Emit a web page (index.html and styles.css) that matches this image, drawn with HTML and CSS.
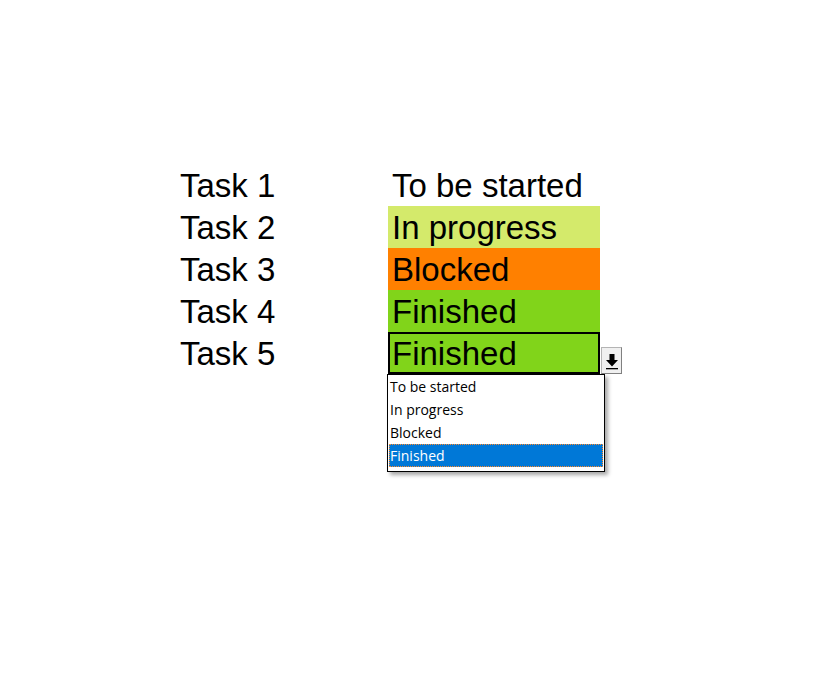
FILE: index.html
```html
<!DOCTYPE html>
<html lang="en">
<head>
    <meta charset="UTF-8">
    <title>Tasks</title>
    <link rel="stylesheet" href="styles.css">
</head>
<body>
    <div class="sheet">
        <div class="task">Task 1</div>
        <div class="status">To be started</div>

        <div class="task">Task 2</div>
        <div class="status progress">In progress</div>

        <div class="task">Task 3</div>
        <div class="status blocked">Blocked</div>

        <div class="task">Task 4</div>
        <div class="status finished">Finished</div>

        <div class="task">Task 5</div>
        <div class="status finished selected">
            Finished
            <!-- validation dropdown -->
            <span class="drop-btn">
                <svg width="14" height="18" viewBox="0 0 14 18">
                    <path d="M4.5 2h5v6h3.5l-6 6.5-6-6.5h3.5z" fill="#000"/>
                    <rect x="1" y="16" width="12" height="1.3" fill="#000"/>
                </svg>
            </span>
            <ul class="drop-list">
                <li>To be started</li>
                <li>In progress</li>
                <li>Blocked</li>
                <li class="active">Finished</li>
            </ul>
        </div>
    </div>
</body>
</html>
```

FILE: styles.css
```css
html, body {
    height: 100%;
}

body {
    margin: 0;
    min-height: 685px;
    background: #fff;
    font-family: 'Liberation Sans', Arial, sans-serif;
}

.sheet {
    display: grid;
    grid-template-columns: 208px 212px;
    grid-auto-rows: 42px;
    padding: 164px 0 200px 180px;
    font-size: 33px;
    line-height: 42px;
    color: #000;
}

.task,
.status {
    padding-top: 1px;
}

.status {
    padding-left: 4px;
    position: relative;
}

.progress {
    background: #d4ea6b;
}

.blocked {
    background: #ff8000;
}

.finished {
    background: #81d41a;
}

.selected {
    box-shadow: inset 0 0 0 2px #000;
}

.drop-btn {
    position: absolute;
    left: 213px;
    top: 15px;
    width: 21px;
    height: 27px;
    box-sizing: border-box;
    border: 1px solid #b4b4b4;
    border-right-color: #808080;
    border-bottom-color: #808080;
    background: #f0f0f0;
    display: flex;
    align-items: center;
    justify-content: center;
    z-index: 2;
}

.drop-btn svg {
    display: block;
    margin-top: 1px;
}

.drop-list {
    position: absolute;
    left: -1px;
    top: 42px;
    width: 218px;
    margin: 0;
    padding: 0 1px 4px 1px;
    box-sizing: border-box;
    list-style: none;
    background: #fff;
    border: 1px solid #000;
    box-shadow: 3px 3px 4px rgba(0, 0, 0, 0.35);
    font-family: 'Open Sans', sans-serif;
    font-size: 14px;
    line-height: 23px;
    z-index: 3;
}

.drop-list li {
    height: 23px;
    padding-left: 1px;
    color: #000;
}

.drop-list li.active {
    background: #0078d7;
    color: #fff;
    outline: 1px dotted #ff8a2a;
    outline-offset: -1px;
}
```
